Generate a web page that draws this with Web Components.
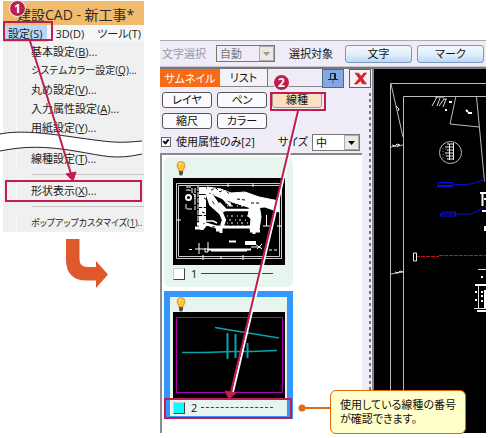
<!DOCTYPE html>
<html lang="ja">
<head>
<meta charset="utf-8">
<title>建設CAD - 新工事</title>
<style>
body {
	margin: 0;
	background: #fff;
	color: #222;
	font: 11px/16px "Open Sans", "Noto Sans CJK JP", sans-serif;
	font-feature-settings: "palt";
}
</style>
</head>
<body>
<manual-figure>
	<settings-menu slot="menu"></settings-menu>
	<cad-window slot="window"></cad-window>
	<step-badge slot="notes" style="--x: 9px; --y: 0px">1</step-badge>
	<step-badge slot="notes" style="--x: 273px; --y: 74px">2</step-badge>
	<call-out slot="notes">使用している線種の番号<br>が確認できます。</call-out>
</manual-figure>

<script>
function define(name, html, setup) {
	const template = document.createElement('template');
	template.innerHTML = html;
	customElements.define(name, class extends HTMLElement {
		connectedCallback() {
			if (this.shadowRoot) return;
			const shadow = this.attachShadow({ mode: 'open' });
			shadow.append(template.content.cloneNode(true));
			if (setup) setup(this, shadow);
		}
	});
}

// page: menu on the left, window on the right, notes on top

define('manual-figure', `
<style>
:host { display: flex; position: relative; align-items: flex-start; }
.side { flex: none; width: 160px; }
.turn { display: block; margin: 7px 0 0 66px; }
.main { flex: 1; min-width: 0; padding: 40px 2px 4px 0; }
.lines { position: absolute; left: 0; top: 0; pointer-events: none; }
</style>
<div class="side">
	<slot name="menu"></slot>
	<svg class="turn" width="44" height="50" fill="#de5a2c">
		<path d="M0 0h13.500v20q0 8 8 8h8.500v-6l12 13.500-12 13.500v-7.500h-9q-21 0-21-21z"/>
	</svg>
</div>
<div class="main"><slot name="window"></slot></div>
<svg class="lines" width="488" height="438" fill="none" stroke="#bf1e4e" stroke-width="2">
	<rect x="4" y="22" width="48" height="18"/>
	<rect x="6" y="181" width="135" height="20"/>
	<rect x="271" y="93" width="54" height="17"/>
	<rect x="165" y="399" width="126" height="19"/>
	<path d="M30 41l41 133"/>
	<path d="M299.500 111l-66.500 281" stroke="#fff" stroke-width="2"/>
	<path d="M298 111l-67 281"/>
	<path d="M66 174l10-2-3 9zM225 391l11 2-7 6z" fill="#bf1e4e" stroke-width="1"/>
</svg>
<slot name="notes"></slot>
`);

define('step-badge', `
<style>
:host {
	display: grid;
	place-items: center;
	position: absolute;
	left: var(--x);
	top: var(--y);
	width: 17px;
	height: 17px;
	border: 1px solid #fff;
	box-sizing: border-box;
	border-radius: 50%;
	background: #bf1e4e;
	color: #fff;
	font-size: 12px;
	font-weight: bold;
}
</style>
<slot></slot>
`);

define('call-out', `
<style>
:host {
	display: block;
	position: absolute;
	left: 330px;
	top: 390px;
	padding: 7px 9px;
	border: 1px solid #e06c10;
	border-radius: 6px;
	background: #ffffcb;
	color: #111;
	font-size: 11px;
	line-height: 14px;
	white-space: nowrap;
}
svg { position: absolute; left: -33px; top: 13px; }
</style>
<svg width="33" height="8" fill="#e06c10"><circle cx="4" cy="4" r="3.500"/><path d="M4 3h29v2H4z"/></svg>
<slot></slot>
`);

// settings menu

define('settings-menu', `
<style>
:host { display: block; padding: 1px 0 0 3px; }
.box { position: relative; width: 141px; overflow: hidden; background: #f0f0f0; }
header { padding: 5px 0 1px 14px; background: #f0bb6c; color: #2b2b2b; font-size: 14px; line-height: 18px; white-space: nowrap; }
nav { display: flex; background: #f5f6f7; }
button { all: unset; white-space: nowrap; }
nav button { padding: 0 4px 0 5px; line-height: 17px; }
nav button + button { margin-left: 4px; }
nav .open { background: #b5d7f9; }
.items { display: flex; flex-direction: column; padding-left: 13px; }
.items button { padding-left: 14px; border-left: 1px solid #fafafa; line-height: 19px; }
.items .long { font-size: 10px; }
.items .longest { font-size: 9px; }
hr { width: 100%; height: 1px; margin: 6px 0 6px 16px; border: 0; background: #c6c6c6; }
.gap { height: 12px; }
.tear { position: absolute; left: 0; top: 128px; }
</style>
<div class="box">
	<header>建設CAD - 新工事*</header>
	<nav>
		<button class="open">設定(S)</button><button>3D(D)</button><button>ツール(T)</button>
	</nav>
	<div class="items">
		<button>基本設定(<u>B</u>)...</button>
		<button class="long">システムカラー設定(<u>Q</u>)...</button>
		<button>丸め設定(<u>V</u>)...</button>
		<button>入力属性設定(<u>A</u>)...</button>
		<button>用紙設定(<u>Y</u>)...</button>
		<div class="gap"></div>
		<button>線種設定(<u>T</u>)...</button>
		<hr>
		<button>形状表示(<u>X</u>)...</button>
		<hr>
		<button class="longest">ポップアップカスタマイズ(<u>1</u>)..</button>
	</div>
</div>
<svg class="tear" width="146" height="36">
	<path d="M0 6C20 2 45 5 80 10S120 15 142 13V26C115 32 100 28 75 23S25 18 0 23z" fill="#fff"/>
	<path d="M0 6C20 2 45 5 80 10S120 15 142 13M0 23C25 18 45 18 75 23S115 32 142 26" fill="none" stroke="#222"/>
</svg>
`);

// CAD window

define('cad-window', `
<style>
:host { display: flex; flex-direction: column; background: #efecf8; }
.body { display: flex; border-top: 2px solid #777; }
thumb-panel { flex: none; }
cad-view { flex: 1; min-width: 0; }
</style>
<select-bar></select-bar>
<div class="body">
	<thumb-panel></thumb-panel>
	<cad-view></cad-view>
</div>
`);

define('drop-down', `
<style>
:host { display: inline-flex; flex: none; position: relative; width: var(--w, 48px); }
select {
	appearance: none;
	width: 100%;
	height: 17px;
	margin: 0;
	padding: 0 0 0 3px;
	border: 1px solid #777;
	border-radius: 0;
	background: #fff;
	color: #111;
	font: inherit;
	font-feature-settings: inherit;
	line-height: 15px;
}
select:disabled { background: #efecf8; color: #777; opacity: 1; }
svg { position: absolute; right: 1px; top: 1px; pointer-events: none; }
</style>
<select></select>
<svg width="15" height="15"><path d="M.5.500h14v14H.5z" fill="#ece9e2" stroke="#aaa"/><path d="M4 6h7l-3.500 4z"/></svg>
`, (host, shadow) => {
	const select = shadow.querySelector('select');
	select.add(new Option(host.getAttribute('value')));
	select.disabled = host.hasAttribute('disabled');
	select.setAttribute('aria-label', host.getAttribute('label'));
	if (select.disabled) shadow.querySelector('path:last-child').setAttribute('fill', '#999');
});

define('select-bar', `
<style>
:host { display: flex; align-items: center; height: 25px; padding-left: 2px; border-top: 1px solid #aaa; border-bottom: 1px solid #c9c6d2; white-space: nowrap; overflow: hidden; }
.off { flex: none; width: 54px; color: #9a98a2; }
.target { flex: none; margin: 0 12px 0 14px; color: #111; }
button {
	flex: none;
	width: 67px;
	height: 18px;
	margin: 0;
	padding: 0;
	border: 1px solid #7d97c0;
	border-radius: 3px;
	background: linear-gradient(#f2f8fd, #e3effa 50%, #bcd7f1);
	color: #111;
	font: inherit;
	font-feature-settings: inherit;
	line-height: 16px;
}
button + button { margin-left: 5px; }
</style>
<span class="off">文字選択</span>
<drop-down label="文字選択" value="自動" disabled style="--w: 59px"></drop-down>
<span class="target">選択対象</span>
<button>文字</button><button>マーク</button>
`);

define('thumb-panel', `
<style>
:host { display: flex; flex-direction: column; width: 214px; box-sizing: border-box; border-right: 2px solid #888; }
button { margin: 0; padding: 0; border: 0; background: none; color: #111; font: inherit; font-feature-settings: inherit; }
.tabs { display: flex; height: 19px; }
.tabs button { height: 18px; line-height: 17px; }
.tabs .on { width: 60px; background: #f76a17; color: #fff; }
.tabs .off { width: 48px; border-right: 1px solid #777; background: #f4f2f4; }
.rest { flex: 1; height: 18px; }
.rest, .tabs .off { border-bottom: 1px solid #888; box-sizing: border-box; }
.tabs .pin, .tabs .close { flex: none; width: 22px; height: 19px; border: 1px solid #567; display: grid; place-items: center; }
.tabs .pin { background: #7fa8e4; }
.tabs .close { margin: 0 1px 0 5px; background: #f3f1f3; }
.inner { flex: 1; display: flex; }
.col { flex: 1; display: flex; flex-direction: column; }
.kinds { display: grid; grid-template-columns: repeat(3, 50px); gap: 5px; padding: 4px 2px; }
.kinds button { height: 16px; border: 1px solid #555; border-radius: 3px; background: #fbfafc; line-height: 14px; }
.kinds .on { border-color: #a98; background: #fbe0c4; }
.opts { display: flex; align-items: center; padding-left: 1px; height: 18px; white-space: nowrap; color: #111; }
.opts label { display: flex; align-items: center; gap: 5px; flex: none; width: 117px; }
input { appearance: none; position: relative; width: 10px; height: 10px; margin: 0; border: 1px solid #666; background: #fff; }
input:checked::after { content: ""; position: absolute; left: 2px; top: 0; width: 2px; height: 4px; border: solid #111; border-width: 0 2px 2px 0; transform: rotate(40deg); }
.size { flex: none; width: 34px; }
.list { flex: 1; display: flex; flex-direction: column; gap: 4px; width: 202px; box-sizing: border-box; margin-top: 2px; padding: 2px 0 12px 2px; border-top: 2px solid #888; border-left: 2px solid #8b8b90; background: #fff; }
.grip { width: 2px; margin: 5px 1px 4px 0; background: repeating-linear-gradient(#77757c 0 3px, transparent 3px 6px); }
</style>
<div class="tabs">
	<button class="on">サムネイル</button><button class="off">リスト</button><span class="rest"></span>
	<button class="pin" aria-label="固定"><svg width="10" height="13" fill="none" stroke="#123"><path d="M2.500 1.500h5v5.500M2.500 1.500v5.500M0 7.500h10M6.500 2v5"/><path d="M5 8v4" stroke="#754"/></svg></button>
	<button class="close" aria-label="閉じる"><svg width="15" height="13" viewBox="0 0 15 13"><path d="M2 1l4 .4 2 3 3-3.400h2.500L9.500 6.500l4 5.500-4-.2-2-3L4 12H1.500L6 6.500z" fill="#e01f2b" stroke="#b3131d" stroke-width=".6"/></svg></button>
</div>
<div class="inner">
	<div class="col">
		<div class="kinds">
			<button>レイヤ</button><button>ペン</button><button class="on">線種</button>
			<button>縮尺</button><button>カラー</button>
		</div>
		<div class="opts">
			<label><input type="checkbox" checked>使用属性のみ[2]</label>
			<span class="size">サイズ</span>
			<drop-down label="サイズ" value="中"></drop-down>
		</div>
		<div class="list">
			<thumb-card>
				<svg slot="view" width="112" height="87" viewBox="0 0 112 87" stroke="#fff" fill="none">
					<path d="M3.500 5.500h105v75H3.500zM5.500 7.500h101v71h-101z" stroke="#ccc"/>
					<path d="M4 42h4M104 48h4M30 77v5M70 77v5M55 5v4M80 5v4M48 78v3M90 78v3"/>
					<path d="M28 9v40M31 9v36" stroke-width="4" stroke-dasharray="7 1 12 1"/>
					<path d="M13 9h6M13 12h4v2M19 10v5l3 2v5M13 26v5h7M22 10v22M25 8v40" stroke-dasharray="5 1"/>
					<circle cx="15.500" cy="19.500" r="2.500" stroke-width="2"/>
					<path d="M34 9l14 2 10 4 14-1 14 5 20 4v11l-14-5-14 1-19-6-12-5-13-6z" fill="#fff"/>
					<path d="M33 11l5 15 10 9 3 7-2 6M37 16l7 10 8 7" stroke-width="4"/>
					<path d="M41 16l9 4 8 8M46 25l7 7 29 0M50 32h27" stroke-width="2.500"/>
					<path d="M22 50h8l3-4 10 3h35M24 46h5v6M43 52h5v3M81 51v5M77 53h10" stroke-width="3"/>
					<path d="M30 24v19h10l4 2" stroke-width="1.500"/>
					<path d="M77 27l9-1 2 13-2 13h-9l1-11-3-3z" fill="#fff"/>
					<path d="M52 25h24M54 28h22M54 38h22M52 42h24M54 45h22" stroke-dasharray="1 3 2 4"/>
					<path d="M90 48h7M93.500 37v11M100 30l4 1"/>
					<path d="M38 12l5-2 4 4 5-3 4 5M64 21l8 1M78 25h9M31 20l3 2M29 34l3 1M34 49h8M56 47h18" stroke="#000" stroke-dasharray="3 2"/>
					<path d="M56 63.500h7M73 64h9v2h-9zM34 71.500h44M38 72.500h36" stroke-width="2"/>
					<path d="M16 71.500h3M22 71h12M26 65v11M32 70v4h3v-10M82 66l7 5M84 71l5-5M93 66v8M96 72h3M101 72h3M78 69h10"/>
				</svg>
				<span slot="no">1</span>
			</thumb-card>
			<thumb-card selected>
				<svg slot="view" width="112" height="87" viewBox="0 0 112 87" fill="none" stroke="#06a4ac">
					<path d="M3.500 5.500h106v75H3.500z" stroke="#b000b0"/>
					<path d="M42 15.500l12 2 52 8.500M9 40.500h22l30-1 18 0 25-1" stroke-width="1.500"/>
					<path d="M54.500 21v26M62.500 22v24M74.500 31v15" stroke-width="2"/>
				</svg>
				<span slot="no">2</span>
			</thumb-card>
		</div>
	</div>
	<div class="grip"></div>
</div>
`);

define('thumb-card', `
<style>
:host { display: block; width: 117px; padding: 6px 6px 5px; border-radius: 6px; background: #e8f5ef; }
:host([selected]) { padding: 0; border: 6px solid #3296fa; border-bottom-width: 3px; border-radius: 0; }
.top { display: block; margin: -2px 0 2px 6px; }
:host([selected]) .top { margin: 0 0 0 6px; }
.view { margin: 0 2px 0 3px; width: 112px; height: 87px; background: #000; }
footer { display: flex; align-items: center; height: 17px; padding-left: 3px; color: #111; }
.swatch { width: 10px; height: 10px; border: 1px solid #999; border-color: #ccc #444 #444 #ccc; background: #fff; }
:host([selected]) .swatch { background: #0ff; }
slot[name=no] { display: block; width: 10px; margin-left: 6px; }
.line { width: 72px; border-top: 1px solid #444; }
:host([selected]) .line { border-top-style: dashed; }
</style>
<svg class="top" width="10" height="15" viewBox="0 0 10 15"><path d="M5 .5a4 4 0 0 1 4 4c0 2-1.500 3-2 5.500H3C2.500 7.500 1 6.500 1 4.500a4 4 0 0 1 4-4z" fill="#fcc33c" stroke="#d99a28"/><path d="M3.500 3.500c0-1 1-1.500 1.500-1.500" stroke="#fff" fill="none"/><path d="M3 10h4v3L6 14.500H4L3 13z" fill="#555"/></svg>
<div class="view"><slot name="view"></slot></div>
<footer><span class="swatch"></span><slot name="no"></slot><span class="line"></span></footer>
`);

// drawing area

define('cad-view', `
<style>
:host { display: block; overflow: hidden; background: #000; }
svg { display: block; }
</style>
<svg width="112" height="364" viewBox="374 70 112 364" fill="none" stroke="#bbb">
	<path d="M390.500 434V84.500H486M403.500 434V97.500H486M391 85l12 53M391 148l12-2M391 275l12-2M476.500 97.500l8 85"/>
	<path d="M392 146l3 1 2-2 3 1-3 2M395 273l3 1 2-2 3 1M396 107l3 3-1 2" stroke="#eee"/>
	<path d="M456 97l-6 28 29 3"/>
	<path d="M437 98l-5 9M440 99l-3 8M444 100l-5 7M446 100l-3 8M435 98h9M443 100l4 0" stroke="#ddd"/>
	<path d="M449 103h3M445 111h2M466 111l2 2M468 114h4" stroke="#fff" stroke-width="2"/>
	<circle cx="450.500" cy="153.500" r="11"/>
	<path d="M447 145h6M445 148h8M447 151h6M445 154h9M446 157h8M447 160h6M449.500 145v16M453.500 144v17" stroke="#eee"/>
	<path d="M443 149v10M446 147v12" stroke="#888" stroke-dasharray="1 2"/>
	<path d="M437.500 186.500l1-3h14v4h-15v-1h15M452 186l19-1 15-5M441.500 216l1-3h13v4h-15v-2h15M455 215h16l15-7" stroke="#0c0ce8"/>
	<path d="M416 257.500h23M439 256.500h47" stroke="#c41414" stroke-dasharray="4 1"/>
	<path d="M413.500 254h3v8h-3z" stroke="#eee"/>
	<path d="M480 194h6M482.500 195v12M484 200h2M482 212h4M485 227v5" stroke="#fff" stroke-width="2"/>
	<path d="M478 270.500h8M478.500 286v23M474 309.500h12" stroke="#ddd"/>
	<path d="M475 286h11M481 278h2M475 293h2M481 293h2M481 297h2M475 301h2M481 302h2M485 291v18M477 312h9" stroke="#fff" stroke-width="2"/>
</svg>
`);
</script>
</body>
</html>
